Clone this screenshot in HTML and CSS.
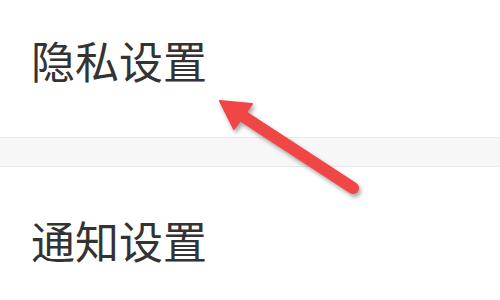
FILE: index.html
```html
<!DOCTYPE html>
<html>
<head>
<meta charset="utf-8">
<link rel="stylesheet" href="styles.css">
</head>
<body>
<div class="page">
  <div class="row row-first">隐私设置</div>
  <div class="gap"></div>
  <div class="row row-second">通知设置</div>
  <svg class="arrow" width="500" height="300" viewBox="0 0 500 300">
    <line x1="353" y1="188" x2="238" y2="113" stroke="#f04646" stroke-width="12" stroke-linecap="round"/>
    <polygon points="220,101 252,104 234,129" fill="#f04646" stroke="#f04646" stroke-width="2" stroke-linejoin="round"/>
  </svg>
</div>
</body>
</html>
```

FILE: styles.css
```css
html, body {
  margin: 0;
  padding: 0;
  background: #ffffff;
}
.page {
  position: relative;
  width: 500px;
  height: 300px;
  overflow: hidden;
  font-family: "Noto Sans CJK SC", "Noto Sans", sans-serif;
  color: #333333;
}
.row {
  font-size: 44px;
  line-height: 44px;
  padding-left: 31px;
  letter-spacing: 0;
}
.row-first {
  height: 99px;
  padding-top: 38px;
  box-sizing: content-box;
}
.gap {
  height: 28px;
  background: #f7f7f7;
  border-top: 1px solid #e6e6e6;
  border-bottom: 1px solid #e6e6e6;
}
.row-second {
  padding-top: 51px;
}
.arrow {
  position: absolute;
  left: 0;
  top: 0;
  filter: drop-shadow(2px 3px 2px rgba(0,0,0,0.35));
}
```
